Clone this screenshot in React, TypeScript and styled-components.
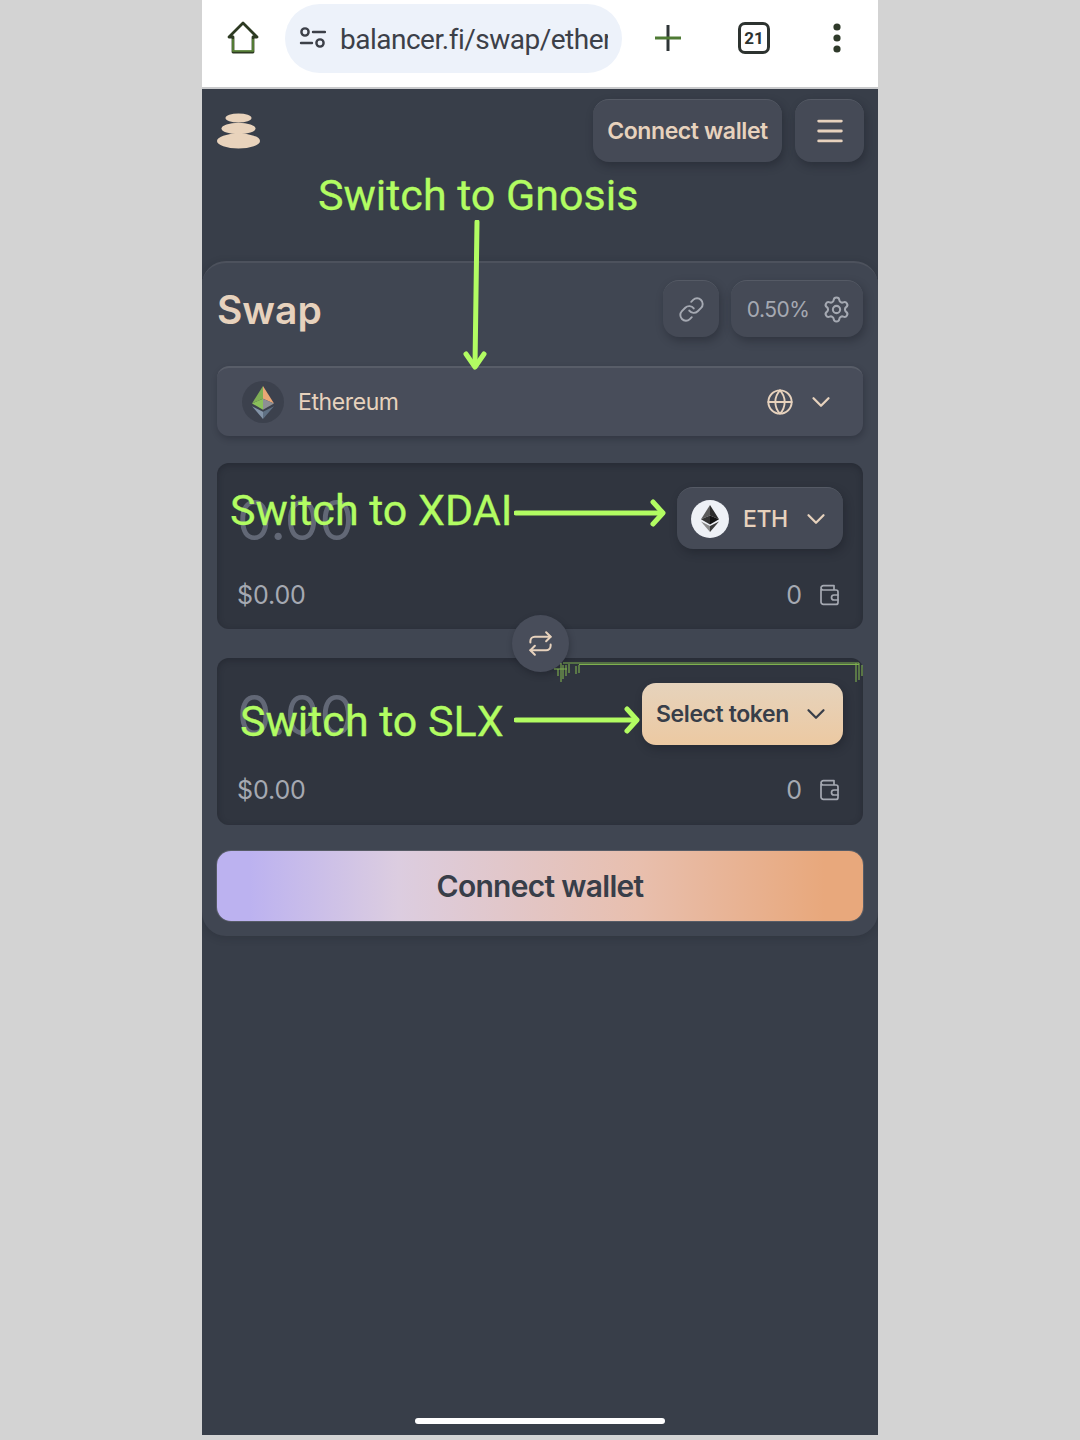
import React from 'react';
import styled, { createGlobalStyle } from 'styled-components';
import { ChevronDown, Globe, Link, Menu, Repeat, Settings } from 'lucide-react';

const GlobalStyle = createGlobalStyle`
  html, body {
    margin: 0;
    padding: 0;
    background: #d3d3d3;
    font-family: Inter, "Liberation Sans", sans-serif;
  }
  * {
    box-sizing: border-box;
  }
  svg {
    flex: none;
  }
`;

const green = '#b2fc62';
const cream = '#e7d2bd';
const muted = '#a5a9b2';

const HomeIcon = () => (
  <svg width="34" height="36" viewBox="0 0 34 36" fill="none">
    <path d="M17 3 L31 17 H27 V32 H7 V17 H3 Z" stroke="#2d3a22" strokeWidth="2.8" strokeLinejoin="round" />
    <path d="M7 19 V31 H27 V19" stroke="#5e8c3a" strokeWidth="1.6" />
  </svg>
);

const SiteIcon = () => (
  <svg width="27" height="24" viewBox="0 0 27 24" fill="none" stroke="#3c4048" strokeWidth="2.4">
    <circle cx="6" cy="6" r="3.6" />
    <circle cx="21" cy="17" r="3.6" />
    <path d="M14 6 H26" strokeLinecap="round" />
    <path d="M2 17 H13" strokeLinecap="round" />
  </svg>
);

const PlusIcon = () => (
  <svg width="30" height="30" viewBox="0 0 30 30" fill="none">
    <path d="M15 2 V28" stroke="#2f3537" strokeWidth="3" />
    <path d="M2 15 H28" stroke="#4e7a34" strokeWidth="3" />
  </svg>
);

const DotsIcon = () => (
  <svg width="10" height="32" viewBox="0 0 10 32" fill="#2f3a2a">
    <circle cx="5" cy="5" r="3.6" />
    <circle cx="5" cy="16" r="3.6" />
    <circle cx="5" cy="27" r="3.6" />
  </svg>
);

const StackLogo = () => (
  <svg width="44" height="36" viewBox="0 0 44 36" fill="#e9d3bc">
    <ellipse cx="21.5" cy="5" rx="13" ry="4.6" />
    <ellipse cx="21.5" cy="15.5" rx="17" ry="5.8" />
    <ellipse cx="21.5" cy="28" rx="21.5" ry="7.4" />
  </svg>
);

const EthDiamond: React.FC<{ mono?: boolean; size: number }> = ({ mono, size }) => (
  <svg width={size} height={size * 1.5} viewBox="0 0 24 36">
    <path d="M12 0 L0 19 L12 14 Z" fill={mono ? '#5b5b5b' : '#7fae55'} />
    <path d="M12 0 L24 19 L12 14 Z" fill={mono ? '#2c2c2c' : '#eba776'} />
    <path d="M0 19 L12 14 L12 26 Z" fill={mono ? '#333' : '#8ac05a'} />
    <path d="M24 19 L12 14 L12 26 Z" fill={mono ? '#111' : '#8d8f94'} />
    <path d="M0 22 L12 28 L12 36 Z" fill={mono ? '#8a8a8a' : '#8394a8'} />
    <path d="M24 22 L12 28 L12 36 Z" fill={mono ? '#3a3a3a' : '#5f7083'} />
  </svg>
);

const WalletIcon = () => (
  <svg width="22" height="22" viewBox="0 0 22 22" fill="none" stroke={muted} strokeWidth="1.7" strokeLinejoin="round">
    <path d="M3 5 V18 a2.4 2.4 0 0 0 2.4 2.4 H18 a2 2 0 0 0 2-2 V8 a2 2 0 0 0-2-2 H5 A2.4 2.4 0 0 1 3 4 a2.4 2.4 0 0 1 2.4-2.4 H16 V6" />
    <path d="M20.5 11 H16 a2.4 2.4 0 0 0 0 5 H20.5" />
  </svg>
);

const GlitchLine = () => (
  <svg width="312" height="24" viewBox="0 0 312 24" fill="none" stroke="#7fb04f" strokeWidth="1.1">
    <path d="M10 3 H306 M26 4.5 H306" />
    <path d="M1 9 H14 M5 9 V16 M8 3 V22 M10 5 V19 M13 5 V16 M16 4 V13 M23 6 V14 M26 5 V13" />
    <path d="M303 3 V22 M306 3 V20 M309 5 V16" />
  </svg>
);

const TipArrow: React.FC<{ length: number }> = ({ length }) => (
  <svg width={length} height="30" viewBox={`0 0 ${length} 30`} fill="none" stroke={green} strokeWidth="5" strokeLinecap="round" strokeLinejoin="round">
    <path d={`M2 15 H${length - 4}`} />
    <path d={`M${length - 13} 4 L${length - 3} 15 L${length - 13} 26`} />
  </svg>
);

const App: React.FC = () => (
  <>
    <GlobalStyle />
    <Phone>
      <BrowserBar>
        <HomeIcon />
        <UrlPill>
          <SiteIcon />
          <UrlText>balancer.fi/swap/ethereum</UrlText>
        </UrlPill>
        <PlusIcon />
        <TabCount>21</TabCount>
        <DotsIcon />
      </BrowserBar>
      <Page>
        <Header>
          <StackLogo />
          <HeaderActions>
            <HeaderButton>Connect wallet</HeaderButton>
            <MenuButton>
              <Menu size={34} strokeWidth={2} color={cream} />
            </MenuButton>
          </HeaderActions>
        </Header>
        <Card>
          <TitleRow>
            <Title>Swap</Title>
            <TitleActions>
              <SquareButton>
                <Link size={27} strokeWidth={1.7} color={muted} />
              </SquareButton>
              <SlippageButton>
                0.50%
                <Settings size={29} strokeWidth={1.7} color={muted} />
              </SlippageButton>
            </TitleActions>
          </TitleRow>
          <NetworkSelect>
            <NetworkBadge>
              <EthDiamond size={22} />
            </NetworkBadge>
            <NetworkName>Ethereum</NetworkName>
            <Globe size={28} strokeWidth={1.6} color={cream} />
            <NetworkChevron size={30} strokeWidth={1.8} color={cream} />
          </NetworkSelect>
          <TokenBox>
            <TokenRow>
              <Amount>0.00</Amount>
              <TokenButton>
                <TokenCoin>
                  <EthDiamond size={18} mono />
                </TokenCoin>
                <TokenSymbol>ETH</TokenSymbol>
                <ChevronDown size={30} strokeWidth={1.8} color={cream} />
              </TokenButton>
            </TokenRow>
            <BalanceRow>
              <span>$0.00</span>
              <BalanceRight>
                0
                <WalletIcon />
              </BalanceRight>
            </BalanceRow>
          </TokenBox>
          <FlipButton>
            <Repeat size={27} strokeWidth={1.8} color={cream} />
          </FlipButton>
          <TokenBox $second>
            <TokenRow>
              <Amount>0.00</Amount>
              <SelectButton>
                Select token
                <ChevronDown size={30} strokeWidth={1.8} color="#383e49" />
              </SelectButton>
            </TokenRow>
            <BalanceRow>
              <span>$0.00</span>
              <BalanceRight>
                0
                <WalletIcon />
              </BalanceRight>
            </BalanceRow>
          </TokenBox>
          <ConnectButton>Connect wallet</ConnectButton>
        </Card>
        <HomeIndicator />
      </Page>

      <GnosisNote>Switch to Gnosis</GnosisNote>
      <GnosisArrow>
        <svg width="30" height="152" viewBox="0 0 30 152" fill="none" stroke={green} strokeWidth="5" strokeLinecap="round" strokeLinejoin="round">
          <path d="M16 2 L14 146" />
          <path d="M5 134 L14 147 L23 134" />
        </svg>
      </GnosisArrow>
      <XdaiNote>Switch to XDAI</XdaiNote>
      <XdaiArrow>
        <TipArrow length={152} />
      </XdaiArrow>
      <SlxNote>Switch to SLX</SlxNote>
      <SlxArrow>
        <TipArrow length={126} />
      </SlxArrow>
      <GlitchSpot>
        <GlitchLine />
      </GlitchSpot>
    </Phone>
  </>
);

export default App;

const Phone = styled.div`
  position: relative;
  width: 676px;
  height: 1435px;
  margin: 0 auto;
  display: flex;
  flex-direction: column;
  overflow: hidden;
`;

const BrowserBar = styled.div`
  height: 89px;
  flex: none;
  display: flex;
  align-items: center;
  padding: 0 36px 11px 24px;
  background: #fff;
  border-bottom: 2px solid #c9cacc;
`;

const UrlPill = styled.div`
  width: 339px;
  height: 69px;
  margin: 0 31px 0 25px;
  padding: 0 14px;
  display: flex;
  align-items: center;
  gap: 14px;
  border-radius: 35px;
  background: #edf2fa;
  overflow: hidden;
`;

const UrlText = styled.span`
  width: 270px;
  padding-top: 2px;
  overflow: hidden;
  font-family: Roboto, sans-serif;
  font-size: 28px;
  letter-spacing: -0.5px;
  color: #3c4048;
  white-space: nowrap;
`;

const TabCount = styled.div`
  width: 32px;
  height: 32px;
  margin: 0 62px 0 55px;
  display: flex;
  align-items: center;
  justify-content: center;
  border: 3px solid #2d3330;
  border-radius: 7px;
  font-family: Roboto, sans-serif;
  font-weight: 700;
  font-size: 17px;
  color: #2d3330;
`;

const Page = styled.div`
  flex: 1;
  position: relative;
  background: #383e49;
`;

const Header = styled.div`
  height: 172px;
  padding: 10px 14px 0 15px;
  display: flex;
  justify-content: space-between;
  align-items: flex-start;

  > svg {
    margin-top: 14px;
  }
`;

const HeaderActions = styled.div`
  display: flex;
  gap: 13px;
`;

const RaisedButton = styled.div`
  display: flex;
  align-items: center;
  justify-content: center;
  background: #454a56;
  border-top: 1px solid #555a65;
  box-shadow: 2px 4px 8px rgba(20, 24, 32, 0.35);
`;

const HeaderButton = styled(RaisedButton)`
  width: 189px;
  height: 63px;
  border-radius: 16px;
  font-size: 23px;
  font-weight: 600;
  letter-spacing: -0.4px;
  color: ${cream};
`;

const MenuButton = styled(RaisedButton)`
  width: 69px;
  height: 63px;
  border-radius: 16px;
`;

const Card = styled.div`
  position: relative;
  height: 675px;
  padding: 0 15px 15px;
  background: #404652;
  border-top: 2px solid #4d525d;
  border-radius: 24px;
  box-shadow: 0 2px 8px rgba(20, 24, 32, 0.2);
`;

const TitleRow = styled.div`
  height: 103px;
  padding-top: 17px;
  display: flex;
  justify-content: space-between;
  align-items: flex-start;
`;

const Title = styled.div`
  margin-top: 6px;
  font-size: 39px;
  font-weight: 600;
  color: ${cream};
`;

const TitleActions = styled.div`
  display: flex;
  gap: 12px;
`;

const SquareButton = styled(RaisedButton)`
  width: 56px;
  height: 57px;
  border-radius: 16px;
`;

const SlippageButton = styled(RaisedButton)`
  width: 132px;
  height: 57px;
  padding-left: 4px;
  gap: 13px;
  border-radius: 16px;
  font-size: 21px;
  letter-spacing: -0.5px;
  color: ${muted};
`;

const NetworkSelect = styled.div`
  height: 70px;
  padding: 0 27px 0 25px;
  display: flex;
  align-items: center;
  background: #484d5a;
  border-top: 2px solid #585d68;
  border-radius: 12px;
  box-shadow: 1px 3px 6px rgba(20, 24, 32, 0.3);
`;

const NetworkBadge = styled.div`
  width: 42px;
  height: 42px;
  display: flex;
  align-items: center;
  justify-content: center;
  border-radius: 50%;
  background: #3c414d;
`;

const NetworkName = styled.div`
  flex: 1;
  margin-left: 14px;
  font-size: 23px;
  letter-spacing: -0.4px;
  color: ${cream};
`;

const NetworkChevron = styled(ChevronDown)`
  margin-left: 12px;
`;

const TokenBox = styled.div<{ $second?: boolean }>`
  height: ${({ $second }) => ($second ? '167px' : '166px')};
  margin-top: ${({ $second }) => ($second ? '0' : '27px')};
  padding: 24px 20px 0 20px;
  background: #30353f;
  border-radius: 12px;
  box-shadow: inset 0 2px 6px rgba(20, 24, 32, 0.35);
`;

const TokenRow = styled.div`
  height: 64px;
  display: flex;
  justify-content: space-between;
  align-items: flex-start;
`;

const Amount = styled.div`
  font-size: 55px;
  color: #626876;
`;

const TokenButton = styled(RaisedButton)`
  width: 166px;
  height: 62px;
  justify-content: flex-start;
  padding: 0 12px 0 14px;
  border-radius: 16px;
`;

const TokenSymbol = styled.span`
  margin: 0 13px 0 14px;
  font-size: 23px;
  font-weight: 500;
  letter-spacing: -0.4px;
  color: ${cream};
`;

const TokenCoin = styled.div`
  width: 38px;
  height: 38px;
  flex: none;
  display: flex;
  align-items: center;
  justify-content: center;
  border-radius: 50%;
  background: #eef1f6;
`;

const SelectButton = styled.div`
  width: 201px;
  height: 62px;
  margin-top: 1px;
  padding: 0 12px 0 14px;
  display: flex;
  align-items: center;
  justify-content: space-between;
  border-radius: 14px;
  background: linear-gradient(180deg, #e6d3bc, #ecc9a2);
  box-shadow: 2px 4px 8px rgba(20, 24, 32, 0.35);
  font-size: 23px;
  font-weight: 600;
  letter-spacing: -0.4px;
  color: #383e49;
`;

const BalanceRow = styled.div`
  margin-top: 29px;
  padding-right: 3px;
  display: flex;
  justify-content: space-between;
  align-items: center;
  font-size: 25px;
  letter-spacing: -0.1px;
  color: ${muted};
`;

const BalanceRight = styled.div`
  display: flex;
  align-items: center;
  gap: 16px;
`;

const FlipButton = styled.div`
  position: relative;
  z-index: 1;
  width: 57px;
  height: 57px;
  margin: -14px auto -14px;
  display: flex;
  align-items: center;
  justify-content: center;
  border-radius: 50%;
  background: #484d5a;
  box-shadow: 1px 3px 6px rgba(20, 24, 32, 0.35);
`;

const ConnectButton = styled.div`
  height: 70px;
  margin-top: 26px;
  display: flex;
  align-items: center;
  justify-content: center;
  border-radius: 14px;
  background: linear-gradient(90deg, #bcb2f0 5%, #dccde0 28%, #e8bfae 65%, #e8a87c 94%);
  box-shadow: 0 0 0 1px rgba(255, 255, 255, 0.12);
  font-size: 30px;
  font-weight: 600;
  letter-spacing: -0.7px;
  color: #383e49;
`;

const HomeIndicator = styled.div`
  position: absolute;
  left: 213px;
  bottom: 11px;
  width: 250px;
  height: 6px;
  border-radius: 3px;
  background: #fff;
`;

const Note = styled.div`
  position: absolute;
  z-index: 2;
  font-family: Roboto, sans-serif;
  font-size: 43px;
  line-height: 48px;
  color: ${green};
  -webkit-text-stroke: 0.3px ${green};
  white-space: nowrap;
`;

const GnosisNote = styled(Note)`
  left: 116px;
  top: 171px;
`;

const XdaiNote = styled(Note)`
  left: 28px;
  top: 486px;
`;

const SlxNote = styled(Note)`
  left: 38px;
  top: 697px;
`;

const Overlay = styled.div`
  position: absolute;
  z-index: 2;
  display: flex;
`;

const GnosisArrow = styled(Overlay)`
  left: 259px;
  top: 220px;
`;

const XdaiArrow = styled(Overlay)`
  left: 312px;
  top: 498px;
`;

const SlxArrow = styled(Overlay)`
  left: 312px;
  top: 705px;
`;

const GlitchSpot = styled(Overlay)`
  left: 351px;
  top: 660px;
`;
